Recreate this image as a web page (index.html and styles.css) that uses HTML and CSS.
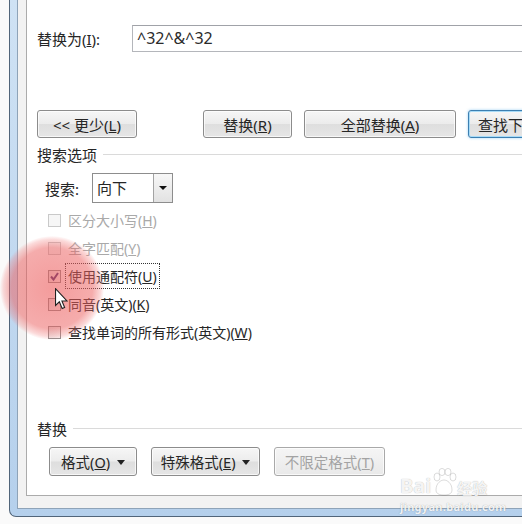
FILE: index.html
```html
<!DOCTYPE html>
<html lang="zh-CN">
<head>
  <meta charset="UTF-8">
  <meta name="viewport" content="width=device-width, initial-scale=1.0">
  <title>查找和替换</title>
  <link rel="stylesheet" href="styles.css">
</head>
<body>
  <div class="screen">
    <div class="window">
      <div class="client">
        <div class="panel">
          <div class="field-row">
            <span class="field-label">替换为(<u>I</u>):</span>
            <div class="text-input">^32^&amp;^32</div>
          </div>

          <div class="button-row">
            <button class="btn btn-less">&lt;&lt; 更少(<u>L</u>)</button>
            <button class="btn btn-replace">替换(<u>R</u>)</button>
            <button class="btn btn-all">全部替换(<u>A</u>)</button>
            <button class="btn btn-next is-default">查找下一处(<u>F</u>)</button>
          </div>

          <div class="group-title"><span>搜索选项</span></div>

          <div class="search-row">
            <span class="search-label">搜索:</span>
            <div class="select">
              <span class="select-value">向下</span>
              <span class="select-btn"><span class="arrow"></span></span>
            </div>
          </div>

          <ul class="options">
            <li class="option is-disabled"><span class="check"></span><span class="option-text">区分大小写(<u>H</u>)</span></li>
            <li class="option is-disabled"><span class="check"></span><span class="option-text">全字匹配(<u>Y</u>)</span></li>
            <li class="option">
              <span class="check is-checked">
                <svg viewBox="0 0 13 13" width="13" height="13"><path d="M3 6.5 L5.5 9.5 L10 3" fill="none" stroke="#3e2c72" stroke-width="2"/></svg>
              </span>
              <span class="option-text has-focus">使用通配符(<u>U</u>)</span>
            </li>
            <li class="option"><span class="check"></span><span class="option-text">同音(英文)(<u>K</u>)</span></li>
            <li class="option"><span class="check"></span><span class="option-text">查找单词的所有形式(英文)(<u>W</u>)</span></li>
          </ul>

          <div class="group-title replace-title"><span>替换</span></div>

          <div class="format-row">
            <button class="btn btn-format">格式(<u>O</u>) <span class="caret"></span></button>
            <button class="btn btn-special">特殊格式(<u>E</u>) <span class="caret"></span></button>
            <button class="btn btn-clear is-disabled">不限定格式(<u>T</u>)</button>
          </div>
        </div>
      </div>
    </div>

    <!-- click highlight and pointer recorded in the capture -->
    <div class="click-spot"></div>
    <svg class="cursor" viewBox="0 0 12 20" width="13" height="22">
      <path d="M0.5 0.5 L0.5 16 L4 12.6 L6.6 18.8 L8.9 17.8 L6.4 11.8 L11 11.8 Z" fill="#fff" stroke="#222" stroke-width="1"/>
    </svg>

    <div class="watermark">
      <div class="wm-logo">
        <span class="wm-bai">Bai</span>
        <svg class="wm-paw" viewBox="0 0 26 28" width="26" height="28">
          <ellipse cx="6" cy="9" rx="3" ry="4" />
          <ellipse cx="11" cy="4" rx="3" ry="3.6" />
          <ellipse cx="17" cy="4" rx="3" ry="3.6" />
          <ellipse cx="22" cy="9" rx="3" ry="4" />
          <path d="M5 22 C5 15 10 12 13 12 C16 12 21 15 21 22 C21 26 17 27 13 27 C9 27 5 26 5 22 Z" />
        </svg>
        <span class="wm-jy">经验</span>
      </div>
      <div class="wm-url">jingyan.baidu.com</div>
    </div>
  </div>
</body>
</html>
```

FILE: styles.css
```css
* {
  box-sizing: border-box;
}
body {
  margin: 0;
  background: #fff;
  font-family: "Noto Sans", "Noto Sans CJK SC", sans-serif;
  color: #262626;
}
.screen {
  position: relative;
  width: 522px;
  height: 524px;
  overflow: hidden;
  background: #fafafa;
}

/* window frame */
.window {
  margin-left: 9px;
  width: 640px;
  height: 517px;
  border: 1px solid #51657a;
  border-top: 0;
  border-right: 0;
  border-radius: 0 0 0 7px;
  background: linear-gradient(#cfe2f4, #b5d0ec);
  padding: 0 0 7px 7px;
}
.client {
  height: 100%;
  border: 1px solid #8ea3b8;
  border-top: 0;
  border-right: 0;
  background: #f2f2f2;
  padding: 0 0 12px 8px;
}
.panel {
  height: 100%;
  overflow: hidden;
  border: 1px solid #ababab;
  border-top: 0;
  border-right: 0;
  background: #fff;
  padding: 25px 0 0 10px;
}

/* replace-with field */
.field-row {
  display: flex;
  align-items: center;
  height: 27px;
}
.field-label {
  width: 95px;
  font-size: 15px;
}
.text-input {
  width: 420px;
  height: 27px;
  border: 1px solid #b4b6bb;
  border-top-color: #a0a2a8;
  padding-left: 4px;
  font-size: 16px;
  line-height: 25px;
  color: #2b2b2b;
}

/* buttons */
.button-row {
  display: flex;
  gap: 12px;
  margin-top: 58px;
  height: 28px;
}
.btn {
  flex: none;
  height: 28px;
  padding: 0;
  font-family: inherit;
  font-size: 15px;
  color: #262626;
  border: 1px solid #8c8c8c;
  border-radius: 3px;
  background: linear-gradient(#f6f6f6 0%, #ececec 48%, #dedede 52%, #e6e6e6 100%);
  box-shadow: inset 0 0 0 1px rgba(255,255,255,0.7);
}
.btn-less {
  width: 100px;
  margin-right: 54px;
}
.btn-replace {
  width: 89px;
}
.btn-all {
  width: 152px;
}
.btn-next {
  width: 152px;
  text-align: left;
  padding-left: 9px;
}
.btn.is-default {
  border-color: #3c7fb1;
  box-shadow: inset 0 0 0 1px #a8dbf7, 0 0 3px rgba(120,190,240,0.7);
}
.format-row {
  display: flex;
  gap: 14px;
  margin-top: 9px;
  padding-left: 12px;
}
.format-row .btn {
  height: 29px;
  font-size: 14.5px;
}
.btn-format {
  width: 88px;
}
.btn-special {
  width: 109px;
}
.btn-clear {
  width: 111px;
}
.btn.is-disabled {
  color: #a3a3a3;
  border-color: #a9a9a9;
  background: linear-gradient(#f5f5f5, #e9e9e9);
}
.caret {
  display: inline-block;
  width: 0;
  height: 0;
  margin-left: 3px;
  border-left: 4px solid transparent;
  border-right: 4px solid transparent;
  border-top: 5px solid #222;
  vertical-align: 3px;
}

/* group headings */
.group-title {
  display: flex;
  align-items: center;
  gap: 6px;
  height: 20px;
  margin-top: 6px;
  font-size: 15px;
}
.group-title::after {
  content: "";
  flex: 1;
  border-top: 1px solid #dadada;
}
.replace-title {
  margin-top: 72px;
}

/* search direction */
.search-row {
  display: flex;
  align-items: center;
  margin-top: 9px;
  padding-left: 8px;
  height: 30px;
}
.search-label {
  width: 47px;
  font-size: 15px;
}
.select {
  display: flex;
  width: 81px;
  height: 30px;
  border: 1px solid #8d8d8d;
  background: #fff;
}
.select-value {
  flex: 1;
  padding-left: 4px;
  font-size: 15px;
  line-height: 28px;
}
.select-btn {
  width: 19px;
  border-left: 1px solid #a3a3a3;
  background: linear-gradient(#f7f7f7, #e2e2e2);
  display: flex;
  align-items: center;
  justify-content: center;
}
.arrow {
  width: 0;
  height: 0;
  border-left: 4px solid transparent;
  border-right: 4px solid transparent;
  border-top: 4px solid #111;
}

/* checkboxes */
.options {
  list-style: none;
  margin: 3px 0 0;
  padding: 0 0 0 11px;
}
.option {
  display: flex;
  align-items: center;
  gap: 7px;
  height: 28px;
  font-size: 14px;
}
.check {
  width: 13px;
  height: 13px;
  border: 1px solid #8f8f8f;
  background: linear-gradient(135deg, #e6e6e6, #fbfbfb);
  display: flex;
}
.check svg {
  margin: -1px;
}
.option.is-disabled {
  color: #a9a9a9;
}
.option.is-disabled .check {
  border-color: #c9c9c9;
  background: #f6f6f6;
}
.option-text.has-focus {
  outline: 1px dotted #333;
  outline-offset: 2px;
}

/* overlays from the screen capture */
.click-spot {
  position: absolute;
  left: 0;
  top: 236px;
  width: 104px;
  height: 104px;
  border-radius: 50%;
  background: radial-gradient(circle, rgba(236,90,90,0.6) 0%, rgba(236,96,96,0.52) 55%, rgba(240,110,110,0.25) 66%, rgba(240,110,110,0) 71%);
  pointer-events: none;
}
.cursor {
  position: absolute;
  left: 55px;
  top: 288px;
}
.watermark {
  position: absolute;
  left: 400px;
  top: 467px;
  color: rgba(255,255,255,0.9);
  text-shadow: 0 0 1px rgba(0,0,0,0.35);
  font-family: "Noto Sans", "Noto Sans CJK SC", sans-serif;
}
.wm-logo {
  display: flex;
  align-items: flex-end;
  height: 29px;
}
.wm-bai {
  font-size: 20px;
  font-weight: bold;
  line-height: 20px;
}
.wm-paw {
  fill: rgba(255,255,255,0.9);
  stroke: rgba(0,0,0,0.18);
  stroke-width: 0.8;
}
.wm-jy {
  font-size: 15px;
  line-height: 16px;
  font-weight: bold;
}
.wm-url {
  font-size: 11px;
  font-weight: bold;
  margin-top: 3px;
  letter-spacing: 0.3px;
}
```
